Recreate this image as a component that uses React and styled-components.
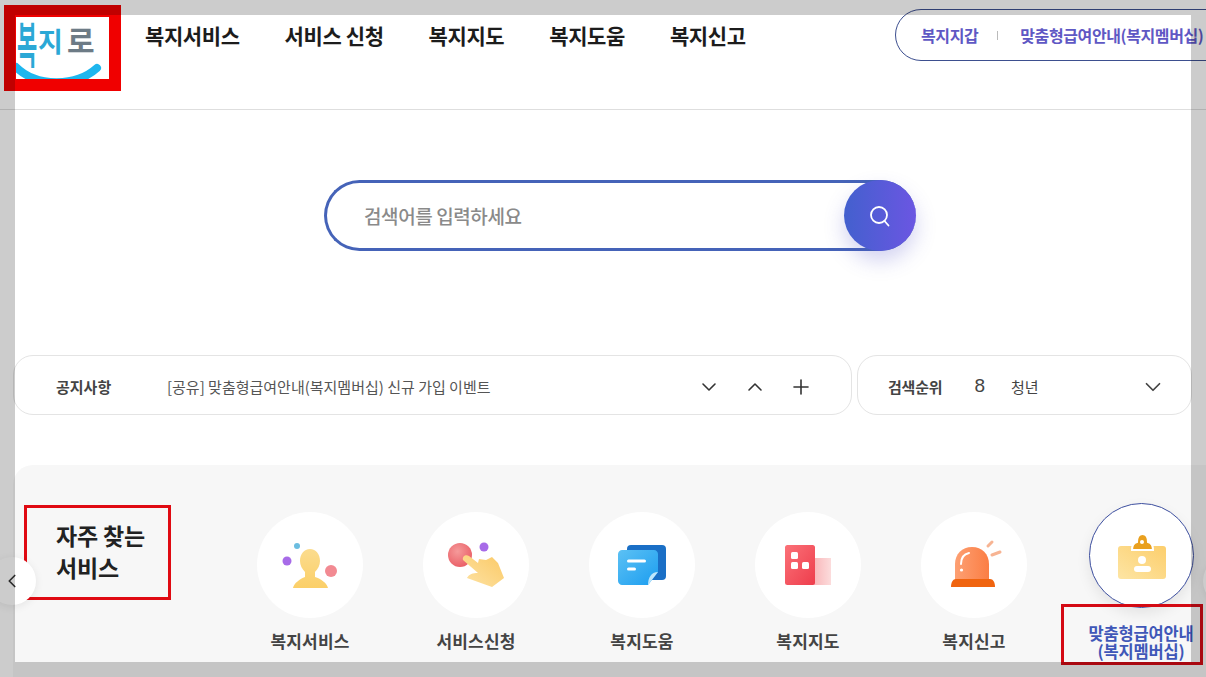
import React from 'react'
import styled, { createGlobalStyle } from 'styled-components'
import { ChevronDown, ChevronUp, ChevronLeft, ChevronRight, Plus } from 'lucide-react'

const FONT = `"Noto Sans CJK KR", "Noto Sans", sans-serif`

const GlobalStyle = createGlobalStyle`
  html, body { margin: 0; padding: 0; background: #fff; }
  body { font-family: ${FONT}; color: #222; }
  * { box-sizing: border-box; }
`

const Page = styled.div`
  position: relative;
  width: 1206px;
  height: 677px;
  overflow: hidden;
  background: #fff;
`

// the grey frame of the capture tool lies over everything, red boxes included
const Frame = styled.div`
  position: absolute;
  inset: 0;
  z-index: 10;
  border: solid rgba(0, 0, 0, 0.2);
  border-width: 15px;
  pointer-events: none;
`

const Header = styled.header`
  display: flex;
  align-items: flex-start;
  height: 110px;
  padding: 5px 0 0 4px;
  border-bottom: 1px solid #dedede;
`

const LogoBox = styled.a`
  flex: none;
  display: block;
  width: 117px;
  height: 86px;
  border: 12px solid #f00000;
  background: #fff;
`

const Nav = styled.nav`
  flex: none;
  display: flex;
  align-items: center;
  gap: 45px;
  width: 750px;
  height: 60px;
  margin-left: 24px;
`

const NavItem = styled.a`
  font-size: 21px;
  font-weight: 700;
  letter-spacing: -0.4px;
  color: #1c1c1c;
  white-space: nowrap;
`

const Pill = styled.div`
  flex: none;
  display: flex;
  align-items: center;
  width: 360px;
  height: 52px;
  margin-top: 4px;
  padding-left: 25px;
  border: 1px solid #3d4f8f;
  border-radius: 26px;
  background: #fff;
`

const PillLink = styled.a`
  font-size: 16px;
  font-weight: 700;
  letter-spacing: -0.4px;
  color: #5f58c4;
  white-space: nowrap;
`

const PillDivider = styled.span`
  width: 1px;
  height: 9px;
  margin: 0 22px 0 19px;
  background: #bbb;
`

const SearchBar = styled.form`
  display: flex;
  align-items: center;
  justify-content: space-between;
  width: 592px;
  height: 71px;
  margin: 70px 0 0 324px;
  padding-left: 37px;
  border: 3px solid #4563b8;
  border-right: 0;
  border-radius: 36px;
`

const Placeholder = styled.span`
  font-size: 19px;
  font-weight: 500;
  letter-spacing: -0.4px;
  color: #8a8a8a;
`

const SearchButton = styled.button`
  flex: none;
  display: flex;
  align-items: center;
  justify-content: center;
  width: 72px;
  height: 71px;
  margin: -3px 0;
  border: 0;
  border-radius: 50% / 50%;
  background: linear-gradient(90deg, #4360ce, #6b56e2);
  box-shadow: 0 10px 20px rgba(80, 80, 200, 0.25);
`

const NoticeRow = styled.section`
  display: flex;
  gap: 5px;
  margin: 104px 0 0 13px;
`

const NoticeCard = styled.div`
  flex: none;
  display: flex;
  align-items: center;
  width: ${p => p.$width}px;
  height: 60px;
  padding-left: ${p => p.$pad}px;
  border: 1px solid #e4e4e4;
  border-radius: 20px;
  background: #fff;
  color: #333;
`

const NoticeLabel = styled.strong`
  width: 111px;
  padding-top: 3px;
  font-size: 15px;
  font-weight: 700;
  color: #444;
`

const NoticeText = styled.span`
  flex: 1;
  padding-top: 3px;
  font-size: 15px;
  color: #555;
`

const NoticeTools = styled.div`
  display: flex;
  align-items: center;
  gap: 22px;
  margin-right: 38px;
  padding-top: 3px;
  color: #333;
`

const RankLabel = styled.strong`
  padding-top: 3px;
  font-size: 15px;
  font-weight: 700;
  letter-spacing: -0.2px;
  color: #444;
`

const RankNumber = styled.span`
  margin: 0 26px 0 32px;
  padding-top: 2px;
  font-family: "Liberation Sans", sans-serif;
  font-size: 19px;
  color: #444;
`

const RankWord = styled.span`
  flex: 1;
  padding-top: 3px;
  font-size: 15px;
  color: #444;
`

const RankToggle = styled.div`
  display: flex;
  margin-right: 25px;
  padding-top: 3px;
  color: #444;
`

const Services = styled.section`
  position: relative;
  display: flex;
  align-items: flex-start;
  width: 1300px;
  height: 260px;
  margin: 50px 0 0 13px;
  padding: 40px 0 0 11px;
  border-radius: 20px 0 0 0;
  background: #f7f7f7;
`

const TitleBox = styled.h2`
  flex: none;
  width: 147px;
  height: 95px;
  margin: 0 86px 0 0;
  padding: 11px 0 0 29px;
  border: 3px solid #e00a12;
  font-size: 23px;
  font-weight: 700;
  line-height: 32px;
  letter-spacing: -0.2px;
  color: #222;
`

const ServiceList = styled.div`
  display: flex;
  gap: 60px;
  margin-top: 7px;
`

const Service = styled.a`
  flex: none;
  display: flex;
  flex-direction: column;
  align-items: center;
  width: 106px;
`

const Circle = styled.span`
  flex: none;
  display: flex;
  width: 106px;
  height: 106px;
  border-radius: 50%;
  background: #fff;
`

const ActiveCircle = styled(Circle)`
  align-self: flex-start;
  width: 105px;
  height: 105px;
  margin: -9px 0 0 2px;
  border: 1px solid #3d4f9f;
  box-shadow: 0 6px 14px rgba(0, 0, 0, 0.08);
`

const ServiceName = styled.span`
  margin-top: 11px;
  font-size: 17px;
  font-weight: 700;
  line-height: 24px;
  letter-spacing: 0.2px;
  color: #444;
  white-space: nowrap;
`

const ActiveName = styled.span`
  flex: none;
  align-self: flex-start;
  width: 142px;
  height: 61px;
  margin: -4px 0 0 -26px;
  padding: 17px 0 0 18px;
  border: 3px solid #d40a14;
  font-size: 16.5px;
  font-weight: 700;
  line-height: 18px;
  letter-spacing: -0.2px;
  text-align: center;
  color: #3f57b8;
  white-space: nowrap;
`

const RoundArrow = styled.button`
  position: absolute;
  top: 92px;
  left: ${p => (p.$side === 'left' ? '-25px' : '1190px')};
  display: flex;
  align-items: center;
  justify-content: center;
  width: 48px;
  height: 48px;
  padding: 0;
  border: 0;
  border-radius: 50%;
  background: #fff;
  box-shadow: 0 2px 8px rgba(0, 0, 0, 0.08);
  color: #333;
`

const Logo = () => (
  <svg width="93" height="62" viewBox="0 0 93 62">
    <g fontFamily={FONT} fontWeight="700">
      <text x="1" y="21" fontSize="22" fill="#2ba8d6" transform="scale(1 2.2)">복</text>
      <text x="22" y="35" fontSize="27" fill="#2ba8d6">지</text>
      <text x="51" y="35" fontSize="30" fill="#6d7b86">로</text>
    </g>
    <path d="M0 50 C20 70 60 70 81 51" fill="none" stroke="#1eb6ee" strokeWidth="8" strokeLinecap="round" />
  </svg>
)

const SearchGlyph = () => (
  <svg width="22" height="22" viewBox="0 0 22 22" fill="none" stroke="#fff" strokeWidth="1.8" strokeLinecap="round">
    <circle cx="10" cy="10" r="8" />
    <path d="M15.5 16 L19.5 20.5" />
  </svg>
)

const PersonIcon = () => (
  <svg width="106" height="106" viewBox="0 0 106 106">
    <defs>
      <linearGradient id="py" x1="0" y1="0" x2="0" y2="1">
        <stop offset="0" stopColor="#fbdc8e" />
        <stop offset="1" stopColor="#fbcf68" />
      </linearGradient>
    </defs>
    <path d="M36 76 C37 71 43 67 48 65 L48 60 C45 57 43 53 43 49 C43 42 47 37 53 37 C59 37 63 42 63 49 C63 53 61 57 58 60 L58 65 C64 67 70 71 71 76 Z" fill="url(#py)" />
    <circle cx="30" cy="49" r="4.5" fill="#a76be8" />
    <circle cx="40" cy="34" r="3" fill="#6bbde0" />
    <circle cx="74" cy="59" r="6" fill="#f28a92" />
  </svg>
)

const HandIcon = () => (
  <svg width="106" height="106" viewBox="0 0 106 106">
    <defs>
      <radialGradient id="hr" cx=".4" cy=".35" r=".8">
        <stop offset="0" stopColor="#f59a9a" />
        <stop offset="1" stopColor="#e8555e" />
      </radialGradient>
      <linearGradient id="hy" x1="0" y1="1" x2="1" y2="0">
        <stop offset="0" stopColor="#fde3a6" />
        <stop offset="1" stopColor="#fbc965" />
      </linearGradient>
    </defs>
    <circle cx="37" cy="43" r="12" fill="url(#hr)" />
    <circle cx="61" cy="35" r="4.5" fill="#a76be8" />
    <path d="M40 48 C39 44 43 42 46 44 L55 51 L56 47 L63 48 L69 45 L75 51 L81 66 L69 75 L44 66 C46 62 50 61 55 61 Z" fill="url(#hy)" />
  </svg>
)

const NoteIcon = () => (
  <svg width="106" height="106" viewBox="0 0 106 106">
    <defs>
      <linearGradient id="nb" x1="0" y1="0" x2="1" y2="1">
        <stop offset="0" stopColor="#5cc1f4" />
        <stop offset="1" stopColor="#1b9df0" />
      </linearGradient>
    </defs>
    <rect x="38" y="33" width="39" height="35" rx="4" fill="#1a6fc6" />
    <path d="M33 38 L65 38 C67 38 69 40 69 42 L69 60 L59 73 L33 73 C31 73 29 71 29 69 L29 42 C29 40 31 38 33 38 Z" fill="url(#nb)" />
    <path d="M69 60 L59 73 C59 66 62 60 69 60 Z" fill="#bfe6fb" />
    <rect x="38" y="47.5" width="19" height="3" rx="1.5" fill="#fff" />
    <rect x="38" y="55.5" width="9" height="3" rx="1.5" fill="#fff" />
  </svg>
)

const BuildingIcon = () => (
  <svg width="106" height="106" viewBox="0 0 106 106">
    <defs>
      <linearGradient id="br" x1="0" y1="0" x2="1" y2="1">
        <stop offset="0" stopColor="#fb7178" />
        <stop offset="1" stopColor="#ee3d4c" />
      </linearGradient>
      <linearGradient id="bl" x1="0" y1="0" x2="1" y2="0">
        <stop offset="0" stopColor="#f9b5b8" />
        <stop offset="1" stopColor="#fcdcdc" />
      </linearGradient>
    </defs>
    <rect x="58" y="46" width="18" height="27" fill="url(#bl)" />
    <rect x="30" y="33" width="30" height="40" rx="2.5" fill="url(#br)" />
    <rect x="36" y="40" width="7" height="7" rx="1.5" fill="#fff" />
    <rect x="36" y="50" width="7" height="7" rx="1.5" fill="#fff" />
    <rect x="47" y="50" width="7" height="7" rx="1.5" fill="#fff" />
  </svg>
)

const SirenIcon = () => (
  <svg width="106" height="106" viewBox="0 0 106 106">
    <defs>
      <linearGradient id="so" x1="0" y1="0" x2="1" y2="0">
        <stop offset="0" stopColor="#fda073" />
        <stop offset="1" stopColor="#fb7e44" />
      </linearGradient>
    </defs>
    <path d="M34 68 L34 52 C34 42 41 35 51 35 C61 35 68 42 68 52 L68 68 Z" fill="url(#so)" />
    <path d="M30 75 C30 70 32 67 35 67 L69 67 C72 67 74 70 74 75 Z" fill="#f0640f" />
    <path d="M40 52 C40 46 43 42 48 41" fill="none" stroke="#fff" strokeWidth="2" strokeLinecap="round" />
    <circle cx="40.5" cy="58" r="1.6" fill="#fff" />
    <path d="M67 34 L71 30 M71 43 L79 40" stroke="#f7b493" strokeWidth="3" strokeLinecap="round" />
  </svg>
)

const BadgeIcon = () => (
  <svg width="103" height="103" viewBox="0 0 103 103">
    <defs>
      <linearGradient id="cy" x1="1" y1="0" x2="0" y2="1">
        <stop offset="0" stopColor="#fcce6c" />
        <stop offset="1" stopColor="#fde5a4" />
      </linearGradient>
    </defs>
    <rect x="28" y="42" width="48" height="33" rx="3" fill="url(#cy)" />
    <path d="M42 46 C42 42 43 39 47 38 C47 33 49 30 52.5 30 C56 30 58 33 58 38 C62 39 63 42 63 46 Z" fill="#e9a01e" stroke="#fff" strokeWidth="2" />
    <circle cx="52" cy="38" r="2" fill="#fff" />
    <circle cx="52" cy="56" r="4" fill="#fff" />
    <rect x="44" y="62" width="17" height="6" rx="3" fill="#fff" />
  </svg>
)

const SERVICES = [
  { name: '복지서비스', Icon: PersonIcon },
  { name: '서비스신청', Icon: HandIcon },
  { name: '복지도움', Icon: NoteIcon },
  { name: '복지지도', Icon: BuildingIcon },
  { name: '복지신고', Icon: SirenIcon },
]

const NAV = ['복지서비스', '서비스 신청', '복지지도', '복지도움', '복지신고']

export default function App() {
  return (
    <Page>
      <GlobalStyle />
      <Header>
        <LogoBox><Logo /></LogoBox>
        <Nav>
          {NAV.map(item => <NavItem key={item}>{item}</NavItem>)}
        </Nav>
        <Pill>
          <PillLink>복지지갑</PillLink>
          <PillDivider />
          <PillLink>맞춤형급여안내(복지멤버십)</PillLink>
        </Pill>
      </Header>

      <SearchBar>
        <Placeholder>검색어를 입력하세요</Placeholder>
        <SearchButton type="button"><SearchGlyph /></SearchButton>
      </SearchBar>

      <NoticeRow>
        <NoticeCard $width={839} $pad={42}>
          <NoticeLabel>공지사항</NoticeLabel>
          <NoticeText>[공유] 맞춤형급여안내(복지멤버십) 신규 가입 이벤트</NoticeText>
          <NoticeTools>
            <ChevronDown size={24} strokeWidth={1.6} />
            <ChevronUp size={24} strokeWidth={1.6} />
            <Plus size={24} strokeWidth={1.6} />
          </NoticeTools>
        </NoticeCard>
        <NoticeCard $width={335} $pad={30}>
          <RankLabel>검색순위</RankLabel>
          <RankNumber>8</RankNumber>
          <RankWord>청년</RankWord>
          <RankToggle><ChevronDown size={26} strokeWidth={1.6} /></RankToggle>
        </NoticeCard>
      </NoticeRow>

      <Services>
        <RoundArrow $side="left" type="button"><ChevronLeft size={22} strokeWidth={1.8} /></RoundArrow>
        <TitleBox>자주 찾는<br />서비스</TitleBox>
        <ServiceList>
          {SERVICES.map(({ name, Icon }) => (
            <Service key={name}>
              <Circle><Icon /></Circle>
              <ServiceName>{name}</ServiceName>
            </Service>
          ))}
          <Service>
            <ActiveCircle><BadgeIcon /></ActiveCircle>
            <ActiveName>맞춤형급여안내<br />(복지멤버십)</ActiveName>
          </Service>
        </ServiceList>
        <RoundArrow $side="right" type="button"><ChevronRight size={22} strokeWidth={1.8} /></RoundArrow>
      </Services>

      <Frame />
    </Page>
  )
}
